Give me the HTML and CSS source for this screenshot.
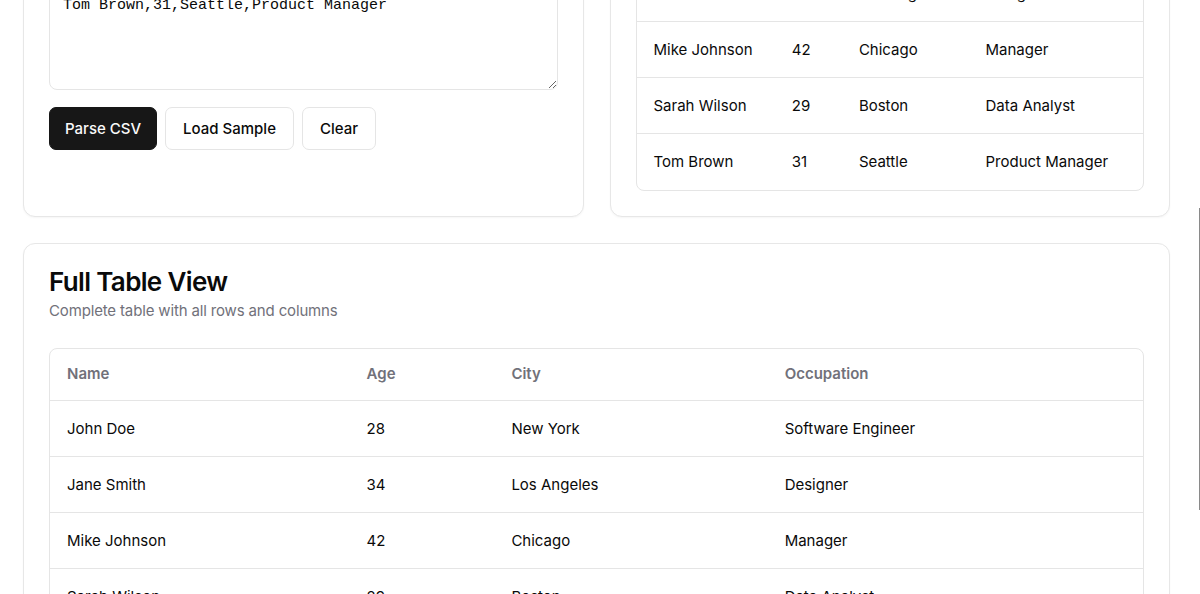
FILE: index.html
```html
<!DOCTYPE html>
<html lang="en">
<head>
<meta charset="utf-8">
<title>CSV Table Viewer</title>
<link rel="stylesheet" href="styles.css">
</head>
<body>
<main class="page">
  <div class="top-grid">
    <section class="card">
      <h2 class="card-title">CSV Input</h2>
      <p class="card-desc">Paste your CSV data below</p>
      <div class="card-body">
        <textarea class="csv-input" spellcheck="false">Name,Age,City,Occupation
John Doe,28,New York,Software Engineer
Jane Smith,34,Los Angeles,Designer
Mike Johnson,42,Chicago,Manager
Sarah Wilson,29,Boston,Data Analyst
Tom Brown,31,Seattle,Product Manager</textarea>
        <div class="actions">
          <button class="btn btn-primary">Parse CSV</button>
          <button class="btn btn-outline">Load Sample</button>
          <button class="btn btn-outline">Clear</button>
        </div>
      </div>
    </section>
    <section class="card">
      <h2 class="card-title">Preview</h2>
      <p class="card-desc">Parsed rows from your CSV</p>
      <div class="card-body">
        <div class="table-wrap">
          <table class="data-table">
            <colgroup><col class="c-name"><col class="c-age"><col class="c-city"><col class="c-occ"></colgroup>
            <thead><tr><th>Name</th><th>Age</th><th>City</th><th>Occupation</th></tr></thead>
            <tbody>
              <tr><td>John Doe</td><td>28</td><td>New York</td><td>Software Engineer</td></tr>
              <tr><td>Jane Smith</td><td>34</td><td>Los Angeles</td><td>Designer</td></tr>
              <tr><td>Mike Johnson</td><td>42</td><td>Chicago</td><td>Manager</td></tr>
              <tr><td>Sarah Wilson</td><td>29</td><td>Boston</td><td>Data Analyst</td></tr>
              <tr><td>Tom Brown</td><td>31</td><td>Seattle</td><td>Product Manager</td></tr>
            </tbody>
          </table>
        </div>
      </div>
    </section>
  </div>
  <section class="card">
    <h2 class="card-title">Full Table View</h2>
    <p class="card-desc">Complete table with all rows and columns</p>
    <div class="card-body">
      <div class="table-wrap">
        <table class="data-table">
          <colgroup><col class="c-name"><col class="c-age"><col class="c-city"><col class="c-occ"></colgroup>
          <thead><tr><th>Name</th><th>Age</th><th>City</th><th>Occupation</th></tr></thead>
          <tbody>
            <tr><td>John Doe</td><td>28</td><td>New York</td><td>Software Engineer</td></tr>
            <tr><td>Jane Smith</td><td>34</td><td>Los Angeles</td><td>Designer</td></tr>
            <tr><td>Mike Johnson</td><td>42</td><td>Chicago</td><td>Manager</td></tr>
            <tr><td>Sarah Wilson</td><td>29</td><td>Boston</td><td>Data Analyst</td></tr>
            <tr><td>Tom Brown</td><td>31</td><td>Seattle</td><td>Product Manager</td></tr>
          </tbody>
        </table>
      </div>
    </div>
  </section>
</main>
<div class="scroll-thumb"></div>
</body>
</html>
```
FILE: styles.css
```css
* { box-sizing: border-box; }

body {
  margin: 0;
  background: #ffffff;
  font-family: Inter, "Noto Sans", Arial, sans-serif;
  color: #0a0a0a;
  overflow: hidden;
}

.page {
  margin-top: -272px;
  padding: 24px 30px 24px 23px;
  display: flex;
  flex-direction: column;
  gap: 26px;
}

.top-grid {
  display: grid;
  grid-template-columns: 1fr 1fr;
  gap: 26px;
}

.card {
  background: #ffffff;
  border: 1px solid #e7e7e7;
  border-radius: 12px;
  padding: 25px;
  box-shadow: 0 1px 2px rgba(0, 0, 0, 0.04);
}

.card-title {
  margin: 0;
  font-size: 26px;
  line-height: 26px;
  font-weight: 600;
  letter-spacing: -0.025em;
  color: #0a0a0a;
}

.card-desc {
  margin: 5px 0 0;
  font-size: 15px;
  line-height: 22px;
  letter-spacing: -0.01em;
  color: #71717a;
}

.card-body {
  margin-top: 26px;
}

.csv-input {
  display: block;
  width: 100%;
  height: 233px;
  padding: 16px 13px 13px;
  border: 1px solid #e5e5e5;
  border-radius: 8px;
  font-family: "Liberation Mono", "DejaVu Sans Mono", monospace;
  font-size: 15px;
  line-height: 24px;
  color: #0a0a0a;
  background: #ffffff;
  resize: vertical;
  outline: none;
}

.actions {
  display: flex;
  gap: 8px;
  margin-top: 17px;
}

.btn {
  height: 43px;
  padding: 0 17px;
  border-radius: 7px;
  font-family: Inter, "Noto Sans", Arial, sans-serif;
  font-size: 15px;
  font-weight: 500;
  cursor: pointer;
}

.btn-primary {
  padding: 0 15px;
  background: #171717;
  color: #fafafa;
  border: 1px solid #171717;
}

.btn-outline {
  background: #ffffff;
  color: #0a0a0a;
  border: 1px solid #e5e5e5;
}

.table-wrap {
  border: 1px solid #e5e5e5;
  border-radius: 8px;
  overflow: hidden;
}

.data-table {
  width: 100%;
  border-collapse: collapse;
  table-layout: fixed;
  font-size: 15px;
}

.c-name { width: 27.5%; }
.c-age { width: 13.25%; }
.c-city { width: 25%; }
.c-occ { width: 34.25%; }

.data-table th {
  text-align: left;
  font-weight: 600;
  color: #71717a;
  padding: 15px 16px 16px;
  line-height: 20px;
  border-bottom: 1px solid #e5e5e5;
}

.data-table td {
  padding: 18px 16px 17px;
  line-height: 20px;
  color: #0a0a0a;
  border-bottom: 1px solid #e5e5e5;
}

.data-table th:first-child,
.data-table td:first-child {
  padding-left: 17px;
}

.data-table tbody tr:last-child td {
  border-bottom: none;
  padding-bottom: 18px;
}

.scroll-thumb {
  position: fixed;
  right: 0;
  top: 208px;
  width: 1px;
  height: 302px;
  background: #8a8a8a;
}
```
